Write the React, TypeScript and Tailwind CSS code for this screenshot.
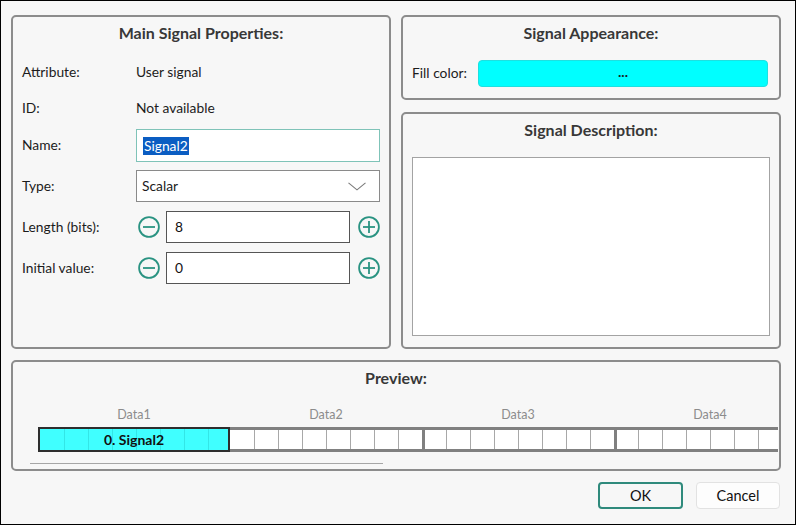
import React from "react";

const font = { fontFamily: "Lato, 'Noto Sans', sans-serif" };

function CircleIcon({ plus }: { plus?: boolean }) {
  return (
    <svg width="22" height="22" viewBox="0 0 22 22" className="shrink-0">
      <circle cx="11" cy="11" r="9.9" fill="none" stroke="#2a9382" strokeWidth="1.8" />
      <line x1="5" y1="11" x2="17" y2="11" stroke="#2a9382" strokeWidth="1.8" />
      {plus && <line x1="11" y1="5" x2="11" y2="17" stroke="#2a9382" strokeWidth="1.8" />}
    </svg>
  );
}

function Panel({ title, className, children }: { title: string; className: string; children?: React.ReactNode }) {
  return (
    <div className={`box-border rounded-[5px] border-2 border-[#8c8c8c] ${className}`}>
      <div className="flex h-[32px] items-center justify-center text-[16px] font-bold text-[#383838]">
        {title}
      </div>
      {children}
    </div>
  );
}

function Stepper({ value }: { value: string }) {
  return (
    <div className="flex h-[32px] shrink-0 items-center">
      <div className="ml-[2px]">
        <CircleIcon />
      </div>
      <div className="ml-[6px] box-border flex h-[32px] w-[184px] shrink-0 items-center border border-[#555] bg-white pl-[8px] text-[13.8px] text-[#111]">
        {value}
      </div>
      <div className="ml-[8px]">
        <CircleIcon plus />
      </div>
    </div>
  );
}

// one byte of the bit row preview, 8 cells of 24px
function Byte({ first }: { first?: boolean }) {
  return (
    <div className="flex h-full w-[192px] shrink-0">
      {Array.from({ length: 8 }).map((_, i) => (
        <div
          key={i}
          className={`box-border h-full w-[24px] shrink-0 bg-white ${
            i === 0 ? (first ? "" : "border-l-[3px] border-[#808080]") : "border-l border-[#a8a8a8]"
          }`}
        />
      ))}
    </div>
  );
}

export default function App() {
  return (
    <div
      style={font}
      className="box-border h-[525px] w-[796px] overflow-hidden border border-black bg-[#f7f7f7] pl-[10px] pt-[14px] text-[#1c1c1c]"
    >
      <div className="flex gap-[10px]">
        <Panel title="Main Signal Properties:" className="h-[334px] w-[380px]">
          <div className="flex flex-col pl-[9px] pr-[9px] text-[13.8px]">
            <div className="mt-[7px] flex h-[32px] items-center">
              <span className="w-[114px] shrink-0">Attribute:</span>
              <span>User signal</span>
            </div>
            <div className="mt-[4px] flex h-[32px] items-center">
              <span className="w-[114px] shrink-0">ID:</span>
              <span>Not available</span>
            </div>
            <div className="mt-[5px] flex h-[33px] items-center">
              <span className="w-[114px] shrink-0">Name:</span>
              <div className="box-border flex h-[33px] flex-1 items-center border border-[#7fc3b8] bg-white pl-[6px]">
                <span className="bg-[#0b5dc2] px-px leading-[18px] text-white">Signal2</span>
              </div>
            </div>
            <div className="mt-[8px] flex h-[32px] items-center">
              <span className="w-[114px] shrink-0">Type:</span>
              <div className="box-border flex h-[32px] flex-1 items-center justify-between border border-[#8a8a8a] bg-white pl-[5px] pr-[13px]">
                <span>Scalar</span>
                <svg width="18" height="9" viewBox="0 0 18 9">
                  <polyline points="0.5,0.8 9,7.8 17.5,0.8" fill="none" stroke="#7a7a7a" strokeWidth="1.1" />
                </svg>
              </div>
            </div>
            <div className="mt-[9px] flex items-center">
              <span className="w-[114px] shrink-0">Length (bits):</span>
              <Stepper value="8" />
            </div>
            <div className="mt-[9px] flex items-center">
              <span className="w-[114px] shrink-0">Initial value:</span>
              <Stepper value="0" />
            </div>
          </div>
        </Panel>

        <div className="flex w-[380px] flex-col gap-[12px]">
          <Panel title="Signal Appearance:" className="h-[85px] w-[380px]">
            <div className="mt-[11px] flex items-center pl-[9px] pr-[11px] text-[13.8px]">
              <span className="w-[66px] shrink-0">Fill color:</span>
              <div className="box-border flex h-[27px] flex-1 items-center justify-center rounded-[4px] border border-[#1ee0e0] bg-[#00ffff] pb-[4px] text-[14px] font-bold">
                ...
              </div>
            </div>
          </Panel>
          <Panel title="Signal Description:" className="h-[237px] w-[380px]">
            <div className="mx-[9px] mt-[11px] box-border h-[179px] border border-[#a3a3a3] bg-white" />
          </Panel>
        </div>
      </div>

      <Panel title="Preview:" className="mt-[11px] h-[111px] w-[770px]">
        <div className="mt-[12px] flex w-[740px] pl-[25px] text-[12.5px] text-[#8c8c8c]">
          {["Data1", "Data2", "Data3", "Data4"].map((d) => (
            <div key={d} className="flex h-[18px] w-[192px] shrink-0 items-center justify-center">
              {d}
            </div>
          ))}
        </div>
        <div className="ml-[25px] mt-[3px] flex h-[25px] w-[740px] overflow-hidden">
          <div className="relative box-border flex h-full w-[192px] shrink-0 border-2 border-[#2e2e2e] bg-[#40ffff]">
            {Array.from({ length: 8 }).map((_, i) => (
              <div
                key={i}
                className={`box-border h-full w-[24px] shrink-0 ${i === 0 ? "" : "border-l border-[#33e6e6]"}`}
              />
            ))}
            <div className="absolute inset-0 flex items-center justify-center text-[14px] font-bold text-[#111]">
              0. Signal2
            </div>
          </div>
          <div className="box-border flex h-full border-y-[3px] border-[#808080]">
            <Byte first />
            <Byte />
            <Byte />
          </div>
        </div>
        <div className="ml-[17px] mt-[11px] h-px w-[353px] bg-[#a6a6a6]" />
      </Panel>

      <div className="mt-[11px] flex w-[770px] justify-end gap-[13px] pr-px text-[14.5px]">
        <button className="box-border h-[27px] w-[85px] rounded-[4px] border-2 border-[#2f8a7c] bg-[#f7f7f7] text-[#111]">
          OK
        </button>
        <button className="box-border h-[27px] w-[84px] rounded-[4px] border border-[#e2e2e2] bg-[#fdfdfd] text-[#111]">
          Cancel
        </button>
      </div>
    </div>
  );
}
